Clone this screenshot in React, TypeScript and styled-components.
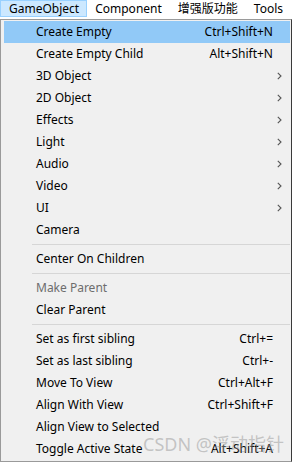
import React from "react";
import styled, { createGlobalStyle } from "styled-components";

const Global = createGlobalStyle`
  html, body { margin: 0; padding: 0; background: #ffffff; }
  body { font-family: "Noto Sans", "Noto Sans CJK SC", sans-serif; font-size: 12px; color: #000; }
`;

const Page = styled.div`
  position: relative;
  width: 294px;
  height: 463px;
  overflow: hidden;
  background: #ffffff;
`;

const MenuBar = styled.div`
  display: flex;
  height: 19px;
  align-items: stretch;
  background: #ffffff;
`;

const BarItem = styled.div<{ $active?: boolean; $first?: boolean }>`
  display: flex;
  align-items: center;
  height: 17px;
  box-sizing: border-box;
  padding: 0 7px 0 ${(p) => (p.$first ? "8px" : "7px")};
  white-space: nowrap;
  background: ${(p) => (p.$active ? "#cce8ff" : "transparent")};
  border: 1px solid ${(p) => (p.$active ? "#99d1ff" : "transparent")};
  font-family: "Noto Sans", "Noto Sans CJK SC", sans-serif;
  font-size: 12px;
  line-height: 1;
`;

const Dropdown = styled.div`
  width: 292px;
  box-sizing: border-box;
  background: #f0f0f0;
  border: 1px solid #9a9a9a;
  border-right-color: #3a3a3a;
  padding: 1px 1px 1px 3px;
  display: flex;
  flex-direction: column;
`;

const Row = styled.div<{ $active?: boolean; $disabled?: boolean }>`
  display: grid;
  grid-template-columns: 32px 1fr auto 17px;
  align-items: center;
  height: 22px;
  background: ${(p) => (p.$active ? "#91c9f7" : "transparent")};
  color: ${(p) => (p.$disabled ? "#6d6d6d" : "#000000")};
  white-space: nowrap;
  line-height: 1;
`;

const Label = styled.span`
  grid-column: 2;
`;

const Shortcut = styled.span`
  grid-column: 3;
  text-align: right;
`;

const Arrow = styled.span`
  grid-column: 4;
  display: flex;
  justify-content: flex-end;
  padding-right: 8px;
`;

const Separator = styled.div`
  height: 7px;
  display: flex;
  align-items: center;
  padding-left: 28px;
  &::after {
    content: "";
    flex: 1;
    height: 1px;
    background: #d6d6d6;
  }
`;

const Watermark = styled.div`
  position: absolute;
  left: 143px;
  top: 433px;
  font-family: "Noto Sans", "Noto Sans CJK SC", sans-serif;
  font-size: 18px;
  line-height: 22px;
  color: rgba(150, 150, 150, 0.5);
  white-space: nowrap;
  pointer-events: none;
`;

const Chevron = () => (
  <svg width="5" height="8" viewBox="0 0 5 8">
    <path d="M0.8 0.8 L4 4 L0.8 7.2" fill="none" stroke="#555" strokeWidth="1.1" />
  </svg>
);

type Item =
  | { sep: true }
  | { sep?: false; label: string; shortcut?: string; sub?: boolean; active?: boolean; disabled?: boolean };

const items: Item[] = [
  { label: "Create Empty", shortcut: "Ctrl+Shift+N", active: true },
  { label: "Create Empty Child", shortcut: "Alt+Shift+N" },
  { label: "3D Object", sub: true },
  { label: "2D Object", sub: true },
  { label: "Effects", sub: true },
  { label: "Light", sub: true },
  { label: "Audio", sub: true },
  { label: "Video", sub: true },
  { label: "UI", sub: true },
  { label: "Camera" },
  { sep: true },
  { label: "Center On Children" },
  { sep: true },
  { label: "Make Parent", disabled: true },
  { label: "Clear Parent" },
  { sep: true },
  { label: "Set as first sibling", shortcut: "Ctrl+=" },
  { label: "Set as last sibling", shortcut: "Ctrl+-" },
  { label: "Move To View", shortcut: "Ctrl+Alt+F" },
  { label: "Align With View", shortcut: "Ctrl+Shift+F" },
  { label: "Align View to Selected" },
  { label: "Toggle Active State", shortcut: "Alt+Shift+A" },
];

export default function App() {
  return (
    <Page>
      <Global />
      <MenuBar>
        <BarItem $active $first>GameObject</BarItem>
        <BarItem>Component</BarItem>
        <BarItem>增强版功能</BarItem>
        <BarItem>Tools</BarItem>
      </MenuBar>
      <Dropdown>
        {items.map((it, i) =>
          it.sep ? (
            <Separator key={i} />
          ) : (
            <Row key={i} $active={it.active} $disabled={it.disabled}>
              <Label>{it.label}</Label>
              <Shortcut>{it.shortcut ?? ""}</Shortcut>
              <Arrow>{it.sub ? <Chevron /> : null}</Arrow>
            </Row>
          )
        )}
      </Dropdown>
      <Watermark>CSDN @浮动指针</Watermark>
    </Page>
  );
}
